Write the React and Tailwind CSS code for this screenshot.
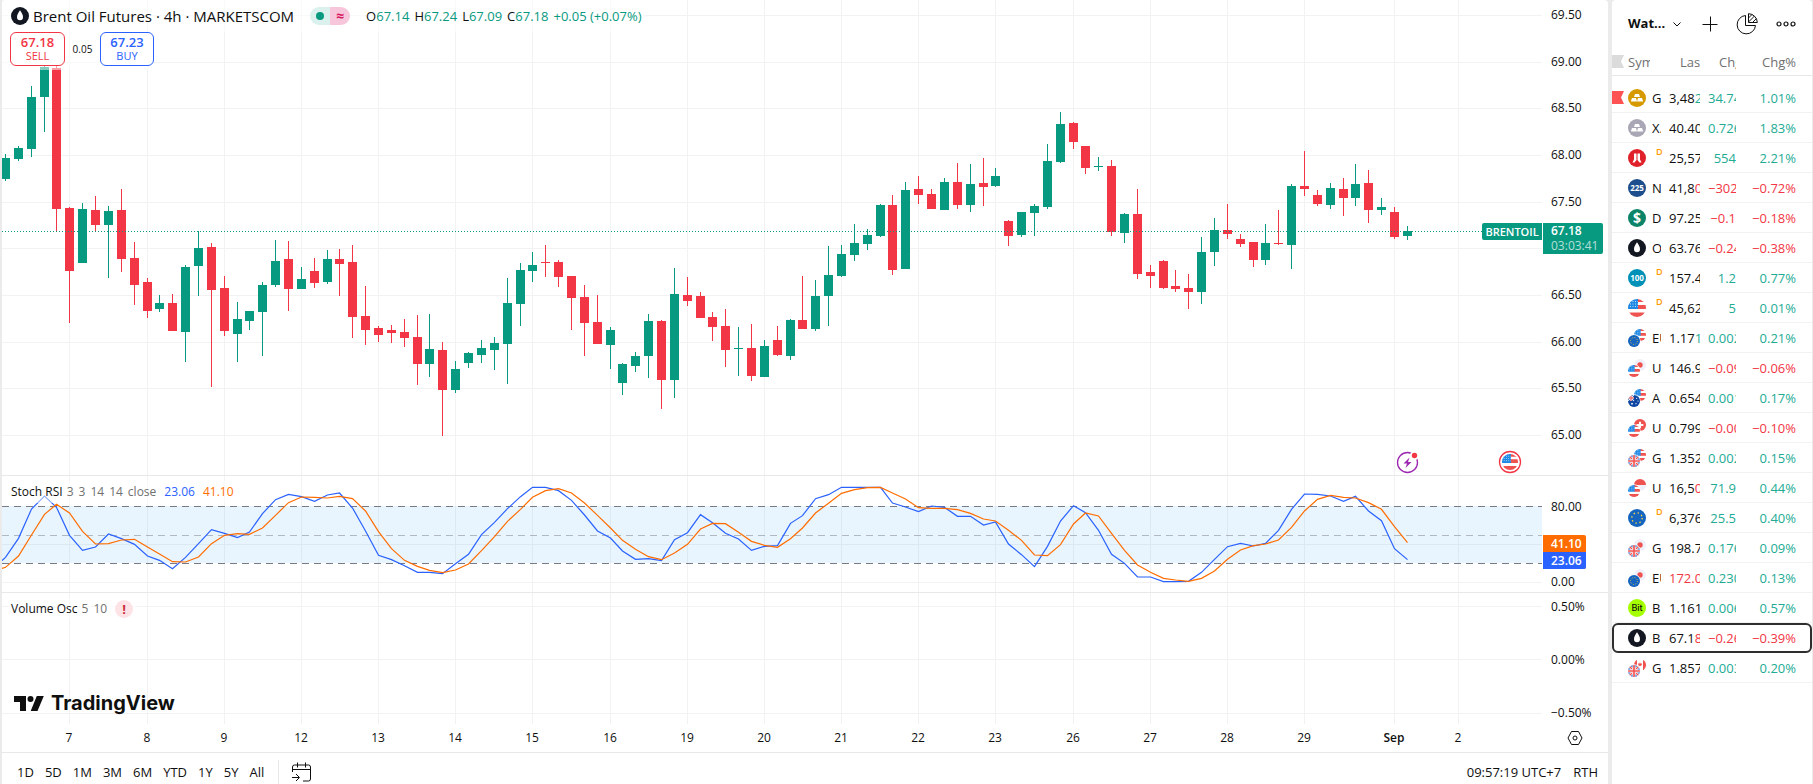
import React, { useId } from 'react';

const UP = '#089981';
const DOWN = '#f23645';

// [direction, high, body top, body bottom, low] as y offsets in the price pane
const candles = [
  ['u', 154, 158, 179, 181], ['u', 146, 148, 159, 161], ['u', 86, 97, 149, 157], ['u', 66, 67, 97, 132],
  ['d', 66, 68, 209, 231], ['d', 207, 208, 271, 323], ['u', 203, 209, 263, 263], ['d', 196, 210, 225, 231],
  ['u', 206, 211, 225, 278], ['d', 189, 210, 259, 272], ['d', 242, 258, 285, 305], ['d', 278, 282, 311, 318],
  ['u', 295, 303, 309, 312], ['d', 294, 303, 331, 331], ['u', 265, 267, 332, 362], ['u', 231, 248, 266, 296],
  ['d', 243, 247, 290, 387], ['d', 276, 288, 331, 336], ['u', 302, 319, 334, 362], ['u', 311, 311, 321, 330],
  ['u', 282, 285, 312, 356], ['u', 240, 261, 285, 287], ['d', 241, 259, 289, 311], ['u', 267, 279, 289, 289],
  ['d', 258, 271, 283, 288], ['u', 250, 259, 282, 284], ['d', 249, 259, 264, 296], ['d', 245, 262, 317, 338],
  ['d', 286, 316, 330, 345], ['d', 326, 328, 335, 342], ['d', 325, 330, 333, 343], ['d', 319, 332, 338, 347],
  ['d', 315, 337, 364, 385], ['u', 314, 349, 364, 377], ['d', 342, 350, 390, 436], ['u', 361, 369, 390, 393],
  ['u', 352, 353, 363, 368], ['u', 340, 348, 355, 363], ['u', 337, 343, 350, 370], ['u', 278, 303, 344, 384],
  ['u', 263, 270, 304, 326], ['u', 252, 265, 271, 282], ['d', 245, 262, 263, 277], ['d', 260, 262, 277, 287],
  ['d', 276, 276, 298, 330], ['d', 285, 297, 323, 356], ['d', 295, 322, 344, 344], ['u', 327, 330, 345, 369],
  ['u', 363, 364, 383, 395], ['u', 352, 356, 366, 372], ['u', 314, 321, 356, 378], ['d', 320, 321, 380, 409],
  ['u', 268, 294, 380, 398], ['d', 277, 295, 301, 306], ['d', 292, 296, 318, 318], ['d', 312, 317, 327, 341],
  ['d', 309, 326, 350, 367], ['u', 327, 348, 349, 376], ['d', 324, 348, 376, 381], ['u', 340, 346, 377, 377],
  ['d', 326, 340, 355, 356], ['u', 319, 320, 356, 360], ['d', 276, 320, 329, 329], ['u', 280, 296, 329, 331],
  ['u', 246, 275, 296, 326], ['u', 245, 254, 276, 277], ['u', 224, 243, 255, 261], ['u', 229, 235, 244, 250],
  ['u', 204, 205, 236, 237], ['d', 195, 205, 270, 275], ['u', 182, 190, 269, 269], ['d', 176, 189, 195, 204],
  ['d', 189, 194, 209, 209], ['u', 178, 182, 210, 210], ['d', 163, 182, 205, 209], ['u', 164, 184, 205, 212],
  ['d', 158, 183, 187, 206], ['u', 168, 176, 186, 187], ['d', 220, 221, 236, 246], ['u', 212, 212, 235, 237],
  ['u', 204, 206, 213, 236], ['u', 144, 161, 207, 209], ['u', 112, 124, 162, 163], ['d', 122, 123, 142, 149],
  ['d', 146, 146, 168, 174], ['u', 157, 166, 167, 171], ['d', 160, 166, 232, 236], ['u', 213, 214, 233, 243],
  ['d', 189, 214, 274, 279], ['d', 265, 272, 276, 288], ['d', 260, 261, 288, 289], ['d', 270, 286, 289, 292],
  ['d', 274, 288, 292, 309], ['u', 237, 252, 292, 304], ['u', 218, 230, 252, 266], ['d', 204, 230, 234, 239],
  ['d', 234, 239, 244, 247], ['d', 242, 242, 260, 267], ['u', 224, 243, 260, 265], ['d', 210, 243, 244, 245],
  ['u', 184, 186, 245, 269], ['d', 151, 186, 189, 196], ['d', 190, 195, 204, 206], ['u', 183, 188, 205, 209],
  ['d', 178, 189, 198, 216], ['u', 164, 184, 198, 206], ['d', 170, 183, 210, 223], ['u', 198, 207, 210, 215],
  ['d', 207, 212, 237, 239], ['u', 226, 231, 236, 240],
];

// oscillator samples, one per bar, in thirds of a pixel
const stochK = [
  262, 205, 117, 78, 112, 196, 241, 231, 192, 206, 223, 258, 271, 296, 262, 221, 179, 190, 203, 186, 131, 89,
  73, 80, 94, 75, 69, 114, 183, 256, 269, 287, 307, 307, 311, 281, 253, 194, 157, 116, 80, 52, 52, 62, 91, 135,
  183, 204, 243, 268, 266, 272, 209, 188, 134, 158, 190, 207, 241, 229, 227, 160, 137, 86, 74, 52, 52, 52, 52,
  99, 111, 125, 108, 112, 139, 139, 165, 156, 222, 254, 290, 229, 153, 107, 128, 181, 253, 280, 321, 321, 335,
  335, 334, 307, 268, 230, 220, 228, 220, 181, 118, 72, 73, 78, 94, 79, 123, 152, 236, 269,
];
const stochD = [
  292, 258, 195, 133, 103, 129, 184, 222, 221, 210, 208, 231, 252, 275, 276, 261, 221, 196, 191, 193, 174, 136,
  98, 81, 82, 84, 79, 86, 123, 185, 236, 271, 289, 301, 308, 300, 282, 242, 200, 154, 118, 82, 62, 56, 69, 99,
  136, 174, 211, 238, 260, 269, 249, 223, 177, 160, 161, 187, 214, 226, 232, 206, 174, 129, 100, 70, 59, 53, 52,
  69, 87, 113, 115, 115, 119, 130, 147, 153, 181, 211, 255, 257, 224, 162, 129, 138, 190, 241, 285, 307, 325,
  330, 334, 325, 303, 268, 240, 227, 222, 210, 172, 123, 88, 76, 82, 84, 98, 118, 170, 218,
];

const dates = [
  [0, '7'], [6, '8'], [12, '9'], [18, '12'], [24, '13'], [30, '14'], [36, '15'], [42, '16'], [48, '19'], [54, '20'],
  [60, '21'], [66, '22'], [72, '23'], [78, '26'], [84, '27'], [90, '28'], [96, '29'], [103, 'Sep'], [108, '2'],
];

const prices = [
  [15, '69.50'], [62, '69.00'], [108, '68.50'], [155, '68.00'], [202, '67.50'], [248, ''],
  [295, '66.50'], [342, '66.00'], [388, '65.50'], [435, '65.00'],
];

// the first bar on screen is bar -5, counted from the start of the 7th
const barX = (bar) => Math.round(69.35 + 12.8615 * bar) - 2;
const linePoints = (values, start) =>
  [`0,${start / 3 - 6}`, ...values.map((v, i) => `${barX(i - 5) + 0.5},${v / 3 - 6}`)].join(' ');

const Grid = ({ rows }) => (
  <g fill="#f2f2f2">
    {dates.map(([bar]) => <rect key={bar} x={barX(bar)} y="0" width="1" height="100%" />)}
    {rows.map((y) => <rect key={y} x="0" y={y} width="100%" height="1" />)}
  </g>
);

const AxisLabels = ({ rows }) => (
  <svg className="block w-full h-full text-xs" fill="#0f0f0f">
    {rows.map(([y, label]) => <text key={y} x="9" y={y + 4}>{label}</text>)}
  </svg>
);

const Drop = ({ className }) => (
  <svg viewBox="0 0 18 18" className={className}>
    <circle cx="9" cy="9" r="9" fill="#131722" />
    <path d="M9 3.2c1.6 2.2 3 4.6 3 6.8a3 3.3 0 0 1-6 0c0-2.2 1.4-4.6 3-6.8z" fill="#fff" />
  </svg>
);

const PricePane = () => (
  <section className="flex h-[476px] border-b border-[#e8e8e8]">
    <div className="relative flex-1 min-w-0 overflow-hidden">
      <svg className="absolute inset-0 w-full h-full" shapeRendering="crispEdges">
        <Grid rows={prices.map(([y]) => y)} />
        {candles.map(([dir, high, top, bottom, low], i) => (
          <g key={i} fill={dir === 'u' ? UP : DOWN}>
            <rect x={barX(i - 5)} y={high} width="1" height={low - high} />
            <rect x={barX(i - 5) - 4} y={top} width="9" height={bottom - top} />
          </g>
        ))}
        <line x1="0" y1="231.5" x2="100%" y2="231.5" stroke={UP} strokeDasharray="1 2" />
        <g shapeRendering="auto" transform="translate(1405.5 462.5)">
          <circle r="10" fill="#fff" stroke="#9c27b0" strokeWidth="1.3" />
          <path d="M2-5-4 1h3.5L-2 5.500 4-.5H.5z" fill="#9c27b0" />
          <circle cx="7" cy="-7" r="4.5" fill="#fff" />
          <circle cx="7" cy="-7" r="2.7" fill={DOWN} />
        </g>
        <g shapeRendering="auto" transform="translate(1508 462)">
          <circle r="10.5" fill="#fff" stroke={DOWN} strokeWidth="1.3" />
          <g transform="translate(-8 -8) scale(.89)"><Flag code="us" /></g>
        </g>
      </svg>

      <div className="relative">
        <div className="flex items-center w-fit h-8 pl-[9px] pr-1 bg-white/50">
          <Drop className="w-[18px] h-[18px]" />
          <h1 className="ml-1 text-[15px] leading-5 whitespace-nowrap">Brent Oil Futures · 4h · MARKETSCOM</h1>
          <div className="flex w-10 h-[18px] ml-4 rounded-full overflow-hidden">
            <span className="flex flex-1 items-center justify-center bg-[#daf1ee]"><i className="w-2 h-2 rounded-full bg-[#089981]" /></span>
            <span className="flex flex-1 items-center justify-center bg-[#f7c6db] text-[#d81b60] text-sm font-bold leading-[18px]">≈</span>
          </div>
          <p className="flex gap-[5px] ml-4 text-[13px] leading-5 text-[#089981] whitespace-nowrap">
            <span><span className="text-[#0f0f0f]">O</span>67.14</span>
            <span><span className="text-[#0f0f0f]">H</span>67.24</span>
            <span><span className="text-[#0f0f0f]">L</span>67.09</span>
            <span><span className="text-[#0f0f0f]">C</span>67.18</span>
            <span>+0.05 (+0.07%)</span>
          </p>
        </div>
        <div className="flex items-center w-fit h-[38px] pl-2 pb-1 bg-white/50">
          <button className="w-[55px] h-[34px] rounded-md border border-[#f23645] bg-white text-[#f23645] text-[11px] leading-[14px]">
            <b className="block text-[13px] font-semibold">67.18</b>SELL
          </button>
          <span className="w-[35px] text-center text-[10px]">0.05</span>
          <button className="w-[54px] h-[34px] rounded-md border border-[#2962ff] bg-white text-[#2962ff] text-[11px] leading-[14px]">
            <b className="block text-[13px] font-semibold">67.23</b>BUY
          </button>
        </div>
      </div>
      <span className="absolute right-0 top-[223px] w-[60px] h-[17px] rounded-l-xs bg-[#089981] text-white text-[11px] leading-[17px] font-semibold text-center">BRENTOIL</span>
    </div>
    <div className="relative w-[66px]">
      <AxisLabels rows={prices} />
      <div className="absolute left-px top-[223px] w-[60px] h-[31px] pl-2 rounded-r-xs bg-[#089981] text-white text-xs leading-[15px]">
        <b className="block font-semibold">67.18</b>
        <span className="text-white/70">03:03:41</span>
      </div>
    </div>
  </section>
);

const StochPane = () => (
  <section className="flex h-[117px] border-b border-[#e8e8e8]">
    <div className="relative flex-1 min-w-0 overflow-hidden">
      <svg className="absolute inset-0 w-full h-full">
        <g shapeRendering="crispEdges">
          <Grid rows={[68, 106]} />
          <rect x="0" y="30" width="100%" height="57" fill="#2196f3" fillOpacity=".1" />
          <g stroke="#787b86" strokeDasharray="7 5">
            <line x1="0" y1="30.5" x2="100%" y2="30.5" />
            <line x1="0" y1="59.5" x2="100%" y2="59.5" strokeOpacity=".5" />
            <line x1="0" y1="87.5" x2="100%" y2="87.5" />
          </g>
        </g>
        <polyline points={linePoints(stochK, 272)} fill="none" stroke="#2962ff" strokeWidth="1.2" />
        <polyline points={linePoints(stochD, 295)} fill="none" stroke="#ff6d00" strokeWidth="1.2" />
      </svg>
      <p className="relative flex w-fit mt-[5px] ml-1.5 px-[3px] bg-white/50 text-xs leading-[22px]">
        Stoch RSI
        <span className="flex gap-[5px] ml-1 text-[#707070]"><span>3</span><span>3</span><span>14</span><span>14</span><span>close</span></span>
        <span className="ml-2 text-[#2962ff]">23.06</span>
        <span className="ml-2 text-[#ff6d00]">41.10</span>
      </p>
    </div>
    <div className="relative w-[66px]">
      <AxisLabels rows={[[31, '80.00'], [106, '0.00']]} />
      <div className="absolute left-px top-[59px] w-[43px] pl-2 rounded-r-xs overflow-hidden text-white text-xs leading-[17px] font-semibold bg-[#ff6d00]">
        41.10
        <span className="block -ml-2 pl-2 bg-[#2962ff]">23.06</span>
      </div>
    </div>
  </section>
);

const VolumePane = () => (
  <section className="flex h-[131px]">
    <div className="relative flex-1 min-w-0 overflow-hidden">
      <svg className="absolute inset-0 w-full h-full" shapeRendering="crispEdges">
        <Grid rows={[13, 66, 120]} />
      </svg>
      <div className="relative flex flex-col justify-between h-full pt-[5px] pb-[9px]">
        <div className="flex items-center w-fit ml-1.5 px-[3px] bg-white/50 text-xs leading-[22px]">
          Volume Osc
          <span className="flex gap-[5px] ml-1 text-[#707070]"><span>5</span><span>10</span></span>
          <span className="flex items-center justify-center w-[18px] h-[18px] ml-2 rounded-full bg-[#fde3e6] text-[#cc2f3c] text-[13px] font-bold">!</span>
        </div>
        <a href="#" aria-label="TradingView" className="flex items-center w-fit ml-3 gap-[7px] font-[Inter] text-xl leading-6 font-bold">
          <svg viewBox="0 0 30 15" className="w-[30px] h-[15px]" fill="#0f0f0f">
            <path d="M0 0h12v15H6V6H0zM23.500 15h-6.800L22.800 0h7z" />
            <circle cx="16.5" cy="3" r="3" />
          </svg>
          TradingView
        </a>
      </div>
    </div>
    <div className="w-[66px]">
      <AxisLabels rows={[[14, '0.50%'], [67, '0.00%'], [120, '−0.50%']]} />
    </div>
  </section>
);

const TimeAxis = () => (
  <div className="flex items-center h-[29px] border-b border-[#e8e8e8]">
    <svg className="flex-1 min-w-0 h-7 text-xs" textAnchor="middle" fill="#0f0f0f">
      {dates.map(([bar, label]) => (
        <text key={bar} x={barX(bar)} y="18" className={label === 'Sep' ? 'font-semibold' : ''}>{label}</text>
      ))}
    </svg>
    <div className="flex justify-center w-[66px]">
      <button aria-label="Chart settings" className="block">
        <svg viewBox="0 0 16 16" className="w-4 h-4" fill="none" stroke="#0f0f0f">
          <path d="M4.500 1.500h7L15 8l-3.500 6.500h-7L1 8z" />
          <circle cx="8" cy="8" r="2" />
        </svg>
      </button>
    </div>
  </div>
);

const ranges = ['1D', '5D', '1M', '3M', '6M', 'YTD', '1Y', '5Y', 'All'];

const BottomBar = () => (
  <footer className="flex items-center justify-between h-[31px] pl-[15px] pr-2.5 pt-1.5 text-[13px] leading-6 whitespace-nowrap">
    <div className="flex items-center">
      <div className="flex gap-[11px]">
        {ranges.map((range) => <button key={range}>{range}</button>)}
      </div>
      <span className="w-px h-6 ml-3.5 bg-[#e8e8e8]" />
      <button aria-label="Go to date" className="ml-3">
        <svg viewBox="0 0 20 20" className="block w-5 h-5" fill="none" stroke="#0f0f0f">
          <path d="M1.5 10V5a2 2 0 0 1 2-2h14a2 2 0 0 1 2 2v12a2 2 0 0 1-2 2H12M1.5 7.5h18M6.5.5v5M14.5.5v5M1 15.5h7M5 12l3.5 3.5L5 19" />
        </svg>
      </button>
    </div>
    <div className="flex gap-3">
      <button>09:57:19 UTC+7</button>
      <button>RTH</button>
    </div>
  </footer>
);

// flags on an 18x18 field, cut to a circle by the parent
const flags = {
  us: (
    <>
      <path d="M0 0h18v18H0z" fill="#fff" />
      <path d="M9 0h9v3H9zM9 6h9v4H9zM0 13.5h18V18H0z" fill="#ef5350" />
      <path d="M0 0h10v10H0z" fill="#1e88e5" />
      <path d="M2 2.5h8M2 5h8M2 7.5h8" stroke="#bbdefb" strokeDasharray="1 1.5" />
    </>
  ),
  eu: (
    <>
      <path d="M0 0h18v18H0z" fill="#1565c0" />
      <circle cx="9" cy="9" r="5.2" fill="none" stroke="#ffd93b" strokeWidth="1.3" strokeDasharray="1.4 2.68" />
    </>
  ),
  jp: (
    <>
      <path d="M0 0h18v18H0z" fill="#f0f0fa" />
      <circle cx="9" cy="9" r="4" fill="#ef5350" />
    </>
  ),
  gb: (
    <>
      <path d="M0 0h18v18H0z" fill="#2b5fbd" />
      <path d="M0 0l18 18M18 0 0 18" stroke="#fff" strokeWidth="4" />
      <path d="M0 0l18 18M18 0 0 18" stroke="#ef5350" strokeWidth="2" />
      <path d="M9 0v18M0 9h18" stroke="#fff" strokeWidth="4.5" />
      <path d="M9 0v18M0 9h18" stroke="#ef5350" strokeWidth="2.5" />
    </>
  ),
  au: (
    <>
      <path d="M0 0h18v18H0z" fill="#0d47a1" />
      <path d="M0 0l9 9M9 0 0 9" stroke="#fff" strokeWidth="1.5" />
      <path d="M4.5 0v9M0 4.5h9" stroke="#fff" strokeWidth="2.5" />
      <path d="M4.5 0v9M0 4.5h9" stroke="#ef5350" strokeWidth="1.5" />
      <g fill="#fff"><circle cx="6" cy="13" r="1.3" /><circle cx="13" cy="5" r=".9" /><circle cx="15" cy="9" r=".9" /><circle cx="12" cy="13" r=".9" /></g>
    </>
  ),
  ch: (
    <>
      <path d="M0 0h18v18H0z" fill="#ef5350" />
      <path d="M9 4v10M4 9h10" stroke="#fff" strokeWidth="3" />
    </>
  ),
  id: (
    <>
      <path d="M0 0h18v18H0z" fill="#f0f0fa" />
      <path d="M0 0h18v9H0z" fill="#ef5350" />
    </>
  ),
  ca: (
    <>
      <path d="M0 0h18v18H0z" fill="#fff" />
      <path d="M0 0h4.5v18H0zM13.5 0H18v18h-4.5zM9 5l1 2 2-.5-.5 3L9 11 6.5 9.5l-.5-3L8 7z" fill="#ef5350" />
    </>
  ),
};

function Flag({ code }) {
  const id = useId();
  return (
    <>
      <clipPath id={id}><circle cx="9" cy="9" r="9" /></clipPath>
      <g clipPath={`url(#${id})`}>{flags[code]}</g>
    </>
  );
}

const Bars = ({ color }) => (
  <svg viewBox="0 0 18 18" className="w-[18px] h-[18px]">
    <circle cx="9" cy="9" r="9" fill={color} />
    <path d="M7 5h4l1 3H6zM4 9h4l1 3.5H2.8zM10 9h4l1.2 3.5H9z" fill="#fff" />
  </svg>
);

const icons = {
  gold: <Bars color="#d69a00" />,
  silver: <Bars color="#a9a7b5" />,
  oil: <Drop className="w-[18px] h-[18px]" />,
  hsi: (
    <svg viewBox="0 0 18 18" className="w-[18px] h-[18px]">
      <circle cx="9" cy="9" r="9" fill="#e0202a" />
      <path d="M6 4.500h2.500V11L6.500 13.500h-2L6 10.500zM12 4.500H9.500V11l2 2.500h2L12 10.500z" fill="#fff" />
    </svg>
  ),
  n225: <span className="flex items-center justify-center w-[18px] h-[18px] rounded-full bg-[#1c4d8c] text-white text-[8px] font-bold">225</span>,
  dxy: <span className="flex items-center justify-center w-[18px] h-[18px] rounded-full bg-[#0b8469] text-white text-sm font-bold">$</span>,
  ftse: <span className="flex items-center justify-center w-[18px] h-[18px] rounded-full bg-[#0091b8] text-white text-[8px] font-bold">100</span>,
  bit: <span className="flex items-center justify-center w-[18px] h-[18px] rounded-full bg-[#a6ff00] font-[Inter] text-[9px] font-medium">Bit</span>,
};

const SymbolIcon = ({ name }) => {
  if (icons[name]) return icons[name];
  const [front, back] = name.split('/');
  if (!back) {
    return <svg viewBox="0 0 18 18" className="w-[18px] h-[18px]"><Flag code={front} /></svg>;
  }
  return (
    <svg viewBox="0 0 18 18" className="w-[18px] h-[18px]">
      <g transform="translate(6 0) scale(.667)"><Flag code={back} /></g>
      <circle cx="6" cy="12" r="6.7" fill="#fff" />
      <g transform="translate(0 6) scale(.667)"><Flag code={front} /></g>
    </svg>
  );
};

// `tick` is the tail of the last price, coloured by its latest move
const watchlist = [
  { icon: 'gold', symbol: 'G', last: '3,48', tick: '2', chg: '34.74', pct: '1.01%', flagged: true },
  { icon: 'silver', symbol: 'X.', last: '40.40', chg: '0.726', pct: '1.83%' },
  { icon: 'hsi', delayed: true, last: '25,57', chg: '554', pct: '2.21%' },
  { icon: 'n225', symbol: 'N', last: '41,8', tick: '0', chg: '−302', pct: '−0.72%' },
  { icon: 'dxy', symbol: 'D', last: '97.25', chg: '−0.1', pct: '−0.18%' },
  { icon: 'oil', symbol: 'O', last: '63.76', chg: '−0.24', pct: '−0.38%' },
  { icon: 'ftse', delayed: true, last: '157.4', chg: '1.2', pct: '0.77%' },
  { icon: 'us', delayed: true, last: '45,62', chg: '5', pct: '0.01%' },
  { icon: 'eu/us', symbol: 'EU', last: '1.17', tick: '1', chg: '0.002', pct: '0.21%' },
  { icon: 'us/jp', symbol: 'U', last: '146.9', chg: '−0.09', pct: '−0.06%' },
  { icon: 'au/us', symbol: 'A', last: '0.654', chg: '0.001', pct: '0.17%' },
  { icon: 'us/ch', symbol: 'U', last: '0.799', chg: '−0.00', pct: '−0.10%' },
  { icon: 'gb/us', symbol: 'G', last: '1.352', chg: '0.002', pct: '0.15%' },
  { icon: 'us/id', symbol: 'U', last: '16,5', tick: '0', down: true, chg: '71.9', pct: '0.44%' },
  { icon: 'eu', delayed: true, last: '6,376', chg: '25.5', pct: '0.40%' },
  { icon: 'gb/jp', symbol: 'G', last: '198.7', chg: '0.176', pct: '0.09%' },
  { icon: 'eu/jp', symbol: 'EU', last: '', tick: '172.0', down: true, chg: '0.230', pct: '0.13%' },
  { icon: 'bit', symbol: 'B', last: '1.161', chg: '0.006', pct: '0.57%' },
  { icon: 'oil', symbol: 'B', last: '67.1', tick: '8', chg: '−0.26', pct: '−0.39%', selected: true },
  { icon: 'gb/ca', symbol: 'G', last: '1.857', chg: '0.003', pct: '0.20%' },
];

const Ribbon = ({ color }) => (
  <svg viewBox="0 0 12 13" className="block w-3 h-[13px]"><path d="M0 0h12L9 6.500 12 13H0z" fill={color} /></svg>
);

const WatchRow = ({ item }) => {
  const down = item.pct.startsWith('−');
  const color = down ? 'text-[#f23645]' : 'text-[#22ab94]';
  const tickColor = down || item.down ? 'text-[#f23645]' : 'text-[#22ab94]';
  const fits = item.chg.length <= 4;

  return (
    <tr className={item.selected ? 'rounded-md outline-2 -outline-offset-2 outline-[#2e2e2e]' : ''}>
      <td className="h-[30px] p-0 border-b border-[#f2f2f2]">
        <div className="flex items-center">
          <span className="w-4 shrink-0">{item.flagged && <Ribbon color="#ff5252" />}</span>
          <span className="w-[18px] shrink-0"><SymbolIcon name={item.icon} /></span>
          {item.delayed
            ? <span className="pl-2.5 pb-3 text-[9px] leading-[9px] font-semibold text-[#ff9800]">D</span>
            : <span className="w-[9px] ml-1.5 overflow-hidden">{item.symbol}</span>}
        </div>
      </td>
      <td className="p-0 pl-[7px] border-b border-[#f2f2f2]">
        <div className="overflow-hidden">{item.last}<span className={tickColor}>{item.tick}</span></div>
      </td>
      <td className={`p-0 pl-2 border-b border-[#f2f2f2] ${color}`}>
        <div className={`overflow-hidden ${fits ? 'text-right' : ''}`}>{item.chg}</div>
      </td>
      <td className={`p-0 pr-4 border-b border-[#f2f2f2] text-right ${color}`}>{item.pct}</td>
    </tr>
  );
};

const Watchlist = () => (
  <aside className="w-[200px] shrink-0 bg-white rounded-t">
    <div className="flex items-center h-12 px-4">
      <button className="flex items-center gap-2 text-[13px] font-bold">
        Wat...
        <svg viewBox="0 0 8 5" className="w-2 h-[5px]" fill="none" stroke="#0f0f0f"><path d="M.5.5 4 4 7.500.5" /></svg>
      </button>
      <div className="flex flex-1 items-center justify-end gap-[18px]">
        <button aria-label="Add symbol">
          <svg viewBox="0 0 16 16" className="block w-4 h-4" stroke="#0f0f0f"><path d="M.5 8.500h15M8.500.5v15" /></svg>
        </button>
        <button aria-label="Portfolio">
          <svg viewBox="0 0 22 22" className="block w-[22px] h-[22px]" fill="none" stroke="#0f0f0f">
            <path d="M9.5 2.5a9.2 9.2 0 1 0 10 10h-10zM12.5.7v8.8h8.8A9 9 0 0 0 12.5.7zM12.5 5l3.5-3.5M12.5 9l6-6M16.5 9.5l4-4" />
          </svg>
        </button>
        <button aria-label="More">
          <svg viewBox="0 0 20 6" className="block w-5 h-1.5" fill="none" stroke="#0f0f0f" strokeWidth="1.2">
            <circle cx="3" cy="3" r="2" /><circle cx="10" cy="3" r="2" /><circle cx="17" cy="3" r="2" />
          </svg>
        </button>
      </div>
    </div>
    <table className="w-full table-fixed border-separate border-spacing-0 text-[13px] leading-5 whitespace-nowrap">
      <colgroup>
        <col className="w-[50px]" />
        <col className="w-[38px]" />
        <col className="w-9" />
        <col />
      </colgroup>
      <thead className="text-[#707070]">
        <tr>
          <th className="h-7 p-0 border-b border-[#e8e8e8] font-normal">
            <div className="flex items-center"><span className="w-4 shrink-0"><Ribbon color="#dbdbdb" /></span><span className="w-[22px] overflow-hidden">Sym</span></div>
          </th>
          <th className="p-0 border-b border-[#e8e8e8] font-normal"><div className="w-[20px] ml-auto overflow-hidden text-left">Last</div></th>
          <th className="p-0 border-b border-[#e8e8e8] font-normal"><div className="w-[17px] ml-auto overflow-hidden text-left">Chg</div></th>
          <th className="p-0 pr-4 border-b border-[#e8e8e8] font-normal text-right">Chg%</th>
        </tr>
        <tr aria-hidden="true"><td className="h-[7px] p-0" colSpan={4} /></tr>
      </thead>
      <tbody className="text-[#0f0f0f]">
        {watchlist.map((item, i) => <WatchRow key={i} item={item} />)}
      </tbody>
    </table>
  </aside>
);

export default function App() {
  return (
    <div className="flex gap-1 min-h-screen pl-0.5 pr-px bg-[#ebebeb] font-['Open_Sans',sans-serif] text-[#0f0f0f]">
      <main className="flex-1 min-w-0 bg-white rounded-t">
        <PricePane />
        <StochPane />
        <VolumePane />
        <TimeAxis />
        <BottomBar />
      </main>
      <Watchlist />
    </div>
  );
}
